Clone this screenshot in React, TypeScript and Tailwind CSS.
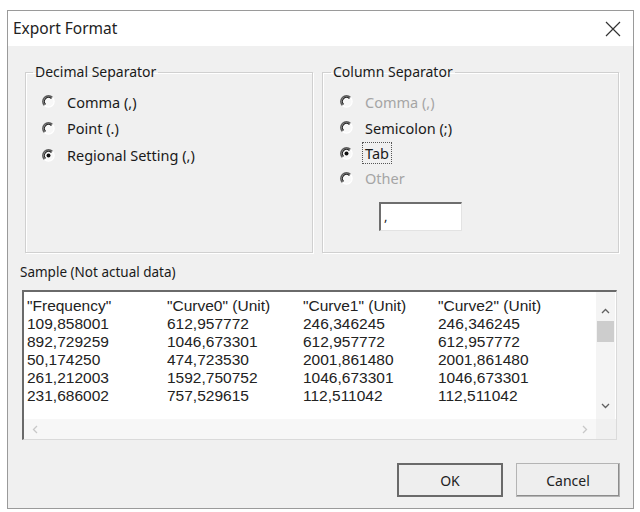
import React from 'react';

const rows = [
  ['"Frequency"', '"Curve0" (Unit)', '"Curve1" (Unit)', '"Curve2" (Unit)'],
  ['109,858001', '612,957772', '246,346245', '246,346245'],
  ['892,729259', '1046,673301', '612,957772', '612,957772'],
  ['50,174250', '474,723530', '2001,861480', '2001,861480'],
  ['261,212003', '1592,750752', '1046,673301', '1046,673301'],
  ['231,686002', '757,529615', '112,511042', '112,511042'],
];

function Radio({ checked = false }: { checked?: boolean }) {
  return (
    <svg width="13" height="13" viewBox="0 0 13 13" className="shrink-0">
      <circle cx="6.5" cy="6.5" r="5.6" fill="#f8f8f8" />
      <path d="M2.5 10.5A5.6 5.6 0 0 1 10.5 2.5" stroke="#5c5c5c" strokeWidth="1.6" fill="none" />
      <path d="M3.6 9.4A4.1 4.1 0 0 1 9.4 3.6" stroke="#222" strokeWidth="1.2" fill="none" />
      <path d="M10.5 2.5A5.6 5.6 0 0 1 2.5 10.5" stroke="#ffffff" strokeWidth="1.2" fill="none" />
      {checked && <circle cx="6.5" cy="6.5" r="2" fill="#111" />}
    </svg>
  );
}

function Option({
  label,
  checked,
  disabled,
  focus,
  h,
}: {
  label: string;
  checked?: boolean;
  disabled?: boolean;
  focus?: boolean;
  h: string;
}) {
  return (
    <div className={`flex items-center gap-[12px] ${h}`}>
      <Radio checked={checked} />
      <span
        className={`text-[14.5px] leading-[18px] ${disabled ? 'text-[#a5a5a5]' : 'text-[#1a1a1a]'} ${
          focus ? 'outline outline-1 outline-dotted outline-[#555] px-[2px] py-[1px] -ml-[2px]' : ''
        }`}
      >
        {label}
      </span>
    </div>
  );
}

export default function App() {
  return (
    <div className="w-[640px] h-[512px] bg-white pt-[10px] pl-[7px] font-['Noto_Sans',sans-serif] text-[13px] text-[#1a1a1a]">
      <div className="w-[627px] h-[499px] border border-[#9a9a9a] flex flex-col">
        {/* title bar */}
        <div className="h-[35px] bg-white flex items-center justify-between pl-[5px] pr-[12px] shrink-0">
          <span className="text-[15.5px] text-[#222]">Export Format</span>
          <svg width="16" height="16" viewBox="0 0 16 16">
            <path d="M1 1L15 15M15 1L1 15" stroke="#333" strokeWidth="1.2" />
          </svg>
        </div>

        {/* body */}
        <div className="flex-1 bg-[#f0f0f0] flex flex-col pt-[17px] pb-[11px]">
          <div className="flex gap-[9px] pl-[17px]">
            <fieldset className="w-[288px] h-[190px] border border-[#d0d0d0] shadow-[inset_1px_1px_0_#fff,1px_1px_0_#fff] pl-[16px] pt-[7px]">
              <legend className="-ml-[9px] px-[2px] leading-[18px] text-[14px]">Decimal Separator</legend>
              <Option label="Comma (,)" h="h-[27px]" />
              <Option label="Point (.)" h="h-[26px]" />
              <Option label="Regional Setting (,)" checked h="h-[28px]" />
            </fieldset>
            <fieldset className="w-[297px] h-[190px] border border-[#d0d0d0] shadow-[inset_1px_1px_0_#fff,1px_1px_0_#fff] pl-[17px] pt-[7px]">
              <legend className="-ml-[9px] px-[2px] leading-[18px] text-[14px]">Column Separator</legend>
              <Option label="Comma (,)" disabled h="h-[27px]" />
              <Option label="Semicolon (;)" h="h-[25px]" />
              <Option label="Tab" checked focus h="h-[26px]" />
              <Option label="Other" disabled h="h-[24px]" />
              <div className="ml-[39px] mt-[12px] w-[83px] h-[29px] bg-white border-t-2 border-l-2 border-[#6e6e6e] border-r border-b border-r-[#e3e3e3] border-b-[#e3e3e3] flex items-center pl-[3px]">
                <span className="text-[13px] leading-none -mt-[2px]">,</span>
              </div>
            </fieldset>
          </div>

          <div className="mt-[10px] pl-[12px] leading-[18px] text-[13.5px]">Sample (Not actual data)</div>

          {/* sample list */}
          <div className="mt-[9px] ml-[14px] w-[595px] h-[150px] bg-white border-t-2 border-l-2 border-[#6a6a6a] border-r border-b border-r-[#dadada] border-b-[#dadada] flex flex-col">
            <div className="flex flex-1 min-h-0">
              <div className="flex-1 pl-[3px] pt-[5px] font-['Liberation_Sans',Arial,sans-serif] text-[15.5px] leading-[18px] text-[#222]">
                {rows.map((r, i) => (
                  <div key={i} className="grid grid-cols-[140px_136px_135px_1fr] h-[18px]">
                    {r.map((c, j) => (
                      <span key={j}>{c}</span>
                    ))}
                  </div>
                ))}
              </div>
              <div className="w-[19px] mr-[1px] bg-[#f4f4f4] flex flex-col items-center pt-[16px]">
                <svg width="9" height="6" viewBox="0 0 9 6">
                  <path d="M1 5L4.5 1.5L8 5" stroke="#606060" strokeWidth="1.3" fill="none" />
                </svg>
                <div className="mt-[7px] w-[17px] h-[21px] bg-[#cdcdcd]" />
                <div className="flex-1" />
                <svg width="9" height="6" viewBox="0 0 9 6" className="mb-[10px]">
                  <path d="M1 1L4.5 4.5L8 1" stroke="#606060" strokeWidth="1.3" fill="none" />
                </svg>
              </div>
            </div>
            <div className="h-[20px] flex">
              <div className="flex-1 bg-[#f7f7f7] flex items-center justify-between px-[8px]">
                <svg width="6" height="9" viewBox="0 0 6 9">
                  <path d="M5 1L1.5 4.5L5 8" stroke="#c8c8c8" strokeWidth="1.3" fill="none" />
                </svg>
                <svg width="6" height="9" viewBox="0 0 6 9">
                  <path d="M1 1L4.5 4.5L1 8" stroke="#c8c8c8" strokeWidth="1.3" fill="none" />
                </svg>
              </div>
              <div className="w-[20px] bg-[#f0f0f0]" />
            </div>
          </div>

          {/* buttons */}
          <div className="mt-auto flex justify-end gap-[13px] pr-[13px]">
            <button className="w-[106px] h-[34px] bg-[#eeeeee] border-2 border-[#6a6a6a] text-[14px] text-[#222]">
              OK
            </button>
            <button className="w-[104px] h-[34px] bg-[#eeeeee] border border-[#b4b4b4] shadow-[inset_-1px_-1px_0_#8c8c8c] text-[14px] text-[#222]">
              Cancel
            </button>
          </div>
        </div>
      </div>
    </div>
  );
}
